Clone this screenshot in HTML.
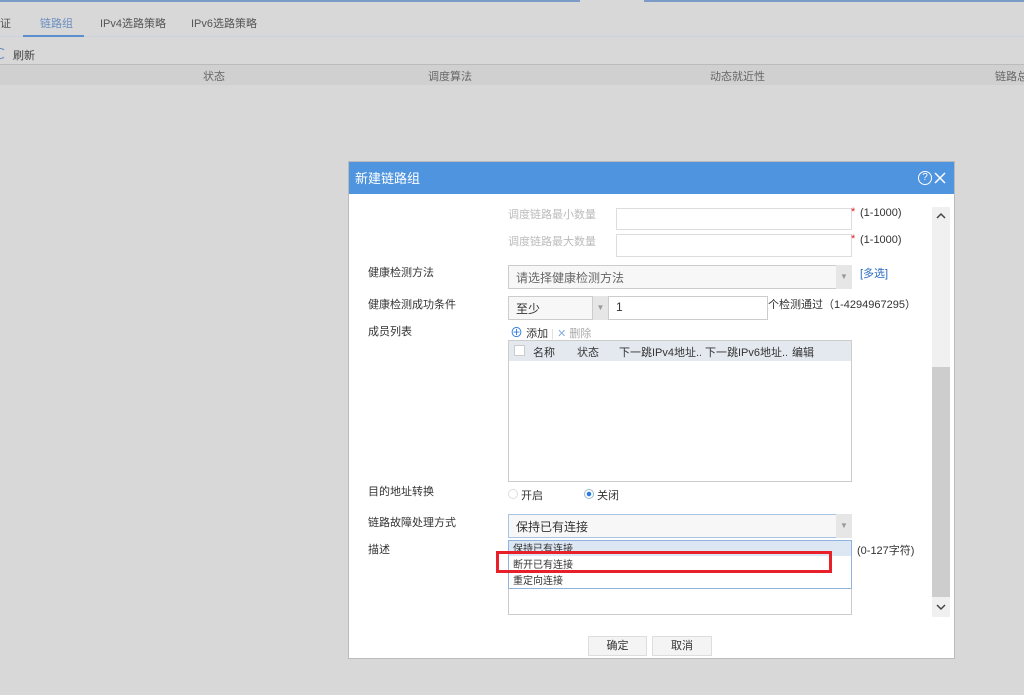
<!DOCTYPE html>
<html><head><meta charset="utf-8"><style>
*{margin:0;padding:0;box-sizing:border-box}
body{width:1024px;height:695px;background:#d8d8d8;font-family:"Liberation Sans","Noto Sans CJK SC",sans-serif;font-size:11px;color:#333;position:relative;overflow:hidden}
.a{position:absolute;white-space:nowrap}
.box{position:absolute;border:1px solid #ccc;background:#fff}
</style></head><body>
<div class="a" style="left:0;top:0;width:580px;height:2px;background:#7a9cc6"></div>
<div class="a" style="left:644px;top:0;width:380px;height:2px;background:#7a9cc6"></div>
<div class="a" style="left:0;top:36px;width:1024px;height:1px;background:#c8d3df"></div>
<div class="a" style="left:0;top:15px;color:#555">证</div>
<div class="a" style="left:40px;top:15px;color:#6a8fc0">链路组</div>
<div class="a" style="left:23px;top:35px;width:61px;height:2px;background:#5b8fd0"></div>
<div class="a" style="left:100px;top:15px;color:#555">IPv4选路策略</div>
<div class="a" style="left:191px;top:15px;color:#555">IPv6选路策略</div>
<div class="a" style="left:-5px;top:48px;width:11px;height:11px;border:1.5px solid #6a8fc0;border-radius:50%;border-right-color:transparent"></div>
<div class="a" style="left:13px;top:47px;color:#444">刷新</div>
<div class="a" style="left:0;top:64px;width:1024px;height:1px;background:#bbb"></div>
<div class="a" style="left:0;top:65px;width:1024px;height:20px;background:#d0d0d0"></div>
<div class="a" style="left:203px;top:68px;color:#666">状态</div>
<div class="a" style="left:428px;top:68px;color:#666">调度算法</div>
<div class="a" style="left:710px;top:68px;color:#666">动态就近性</div>
<div class="a" style="left:995px;top:68px;color:#666">链路总</div>

<div class="a" style="left:348px;top:161px;width:607px;height:498px;background:#fff;border:1px solid #bbb"></div>
<div class="a" style="left:349px;top:162px;width:605px;height:32px;background:#4f94de"></div>
<div class="a" style="left:355px;top:168px;color:#fff;font-size:13px">新建链路组</div>
<div class="a" style="left:918px;top:171px;width:14px;height:14px;border:1px solid #fff;border-radius:50%;background:#4f94de;color:#fff;font-size:10px;text-align:center;line-height:12px">?</div>
<svg class="a" style="left:934px;top:172px" width="12" height="12"><path d="M1 1L11 11M11 1L1 11" stroke="#fff" stroke-width="1.5"/></svg>

<div class="a" style="left:508px;top:206px;color:#bbb">调度链路最小数量</div>
<div class="box" style="left:616px;top:208px;width:236px;height:22px;border-color:#ddd"></div>
<div class="a" style="left:851px;top:206px;color:#e02020">*</div>
<div class="a" style="left:860px;top:207px">(1-1000)</div>
<div class="a" style="left:508px;top:233px;color:#bbb">调度链路最大数量</div>
<div class="box" style="left:616px;top:234px;width:236px;height:23px;border-color:#ddd"></div>
<div class="a" style="left:851px;top:233px;color:#e02020">*</div>
<div class="a" style="left:860px;top:234px">(1-1000)</div>

<div class="a" style="left:368px;top:264px">健康检测方法</div>
<div class="box" style="left:508px;top:265px;width:329px;height:24px;background:#f7f7f7"></div>
<div class="a" style="left:836px;top:265px;width:16px;height:24px;background:#e6e6e6;color:#999;font-size:8px;text-align:center;line-height:24px">▼</div>
<div class="a" style="left:516px;top:269px;color:#666;font-size:12px">请选择健康检测方法</div>
<div class="a" style="left:860px;top:265px;color:#2a6bc0">[多选]</div>

<div class="a" style="left:368px;top:296px">健康检测成功条件</div>
<div class="box" style="left:508px;top:296px;width:85px;height:24px;background:#f7f7f7"></div>
<div class="a" style="left:593px;top:296px;width:15px;height:24px;background:#e6e6e6;color:#999;font-size:8px;text-align:center;line-height:24px">▼</div>
<div class="a" style="left:516px;top:300px;font-size:12px">至少</div>
<div class="box" style="left:608px;top:296px;width:160px;height:24px"></div>
<div class="a" style="left:616px;top:300px;font-size:12px">1</div>
<div class="a" style="left:768px;top:296px">个检测通过（1-4294967295）</div>

<div class="a" style="left:368px;top:323px">成员列表</div>
<div class="a" style="left:510px;top:322px"><span style="color:#2a7be0;font-size:13px">⊕</span> 添加 <span style="color:#ddd">|</span> <span style="color:#8ab0e0">✕</span> <span style="color:#aaa">删除</span></div>
<div class="box" style="left:508px;top:340px;width:344px;height:142px"></div>
<div class="a" style="left:509px;top:341px;width:342px;height:20px;background:#e4e9f0"></div>
<div class="a" style="left:514px;top:345px;width:11px;height:11px;background:#fff;border:1px solid #ccc"></div>
<div class="a" style="left:533px;top:344px">名称</div>
<div class="a" style="left:577px;top:344px">状态</div>
<div class="a" style="left:619px;top:344px;width:82px;overflow:hidden">下一跳IPv4地址...</div>
<div class="a" style="left:705px;top:344px;width:82px;overflow:hidden">下一跳IPv6地址...</div>
<div class="a" style="left:792px;top:344px">编辑</div>

<div class="a" style="left:368px;top:483px">目的地址转换</div>
<div class="a" style="left:508px;top:489px;width:10px;height:10px;border:1px solid #ddd;border-radius:50%"></div>
<div class="a" style="left:521px;top:487px">开启</div>
<div class="a" style="left:584px;top:489px;width:10px;height:10px;border:1px solid #9bc;border-radius:50%;background:radial-gradient(#2a7be0 35%,#fff 45%)"></div>
<div class="a" style="left:597px;top:487px">关闭</div>

<div class="a" style="left:368px;top:514px">链路故障处理方式</div>
<div class="box" style="left:508px;top:514px;width:329px;height:24px;background:#f7f7f7;border-color:#a8c4e4"></div>
<div class="a" style="left:836px;top:514px;width:16px;height:24px;background:#e6e6e6;color:#999;font-size:8px;text-align:center;line-height:24px">▼</div>
<div class="a" style="left:516px;top:518px;font-size:12px">保持已有连接</div>

<div class="a" style="left:368px;top:541px">描述</div>
<div class="box" style="left:508px;top:540px;width:344px;height:75px"></div>
<div class="a" style="left:508px;top:540px;width:344px;height:49px;border:1px solid #8fb4e0;background:#fff"></div>
<div class="a" style="left:509px;top:541px;width:342px;height:15px;background:#dde6f3"></div>
<div class="a" style="left:513px;top:540px;font-size:10px">保持已有连接</div>
<div class="a" style="left:513px;top:556px;font-size:10px">断开已有连接</div>
<div class="a" style="left:513px;top:572px;font-size:10px">重定向连接</div>
<div class="a" style="left:496px;top:551px;width:336px;height:22px;border:3px solid #e8202a"></div>
<div class="a" style="left:857px;top:542px">(0-127字符)</div>

<div class="a" style="left:932px;top:207px;width:18px;height:410px;background:#f0f0f0"></div>
<div class="a" style="left:932px;top:367px;width:18px;height:230px;background:#cdcdcd"></div>
<svg class="a" style="left:936px;top:212px" width="10" height="8"><path d="M1 6L5 2L9 6" stroke="#444" stroke-width="1.5" fill="none"/></svg>
<svg class="a" style="left:936px;top:603px" width="10" height="8"><path d="M1 2L5 6L9 2" stroke="#444" stroke-width="1.5" fill="none"/></svg>

<div class="a" style="left:588px;top:636px;width:59px;height:20px;border:1px solid #ddd;background:#f4f4f4;text-align:center;line-height:18px">确定</div>
<div class="a" style="left:652px;top:636px;width:60px;height:20px;border:1px solid #ddd;background:#f4f4f4;text-align:center;line-height:18px">取消</div>
</body></html>
